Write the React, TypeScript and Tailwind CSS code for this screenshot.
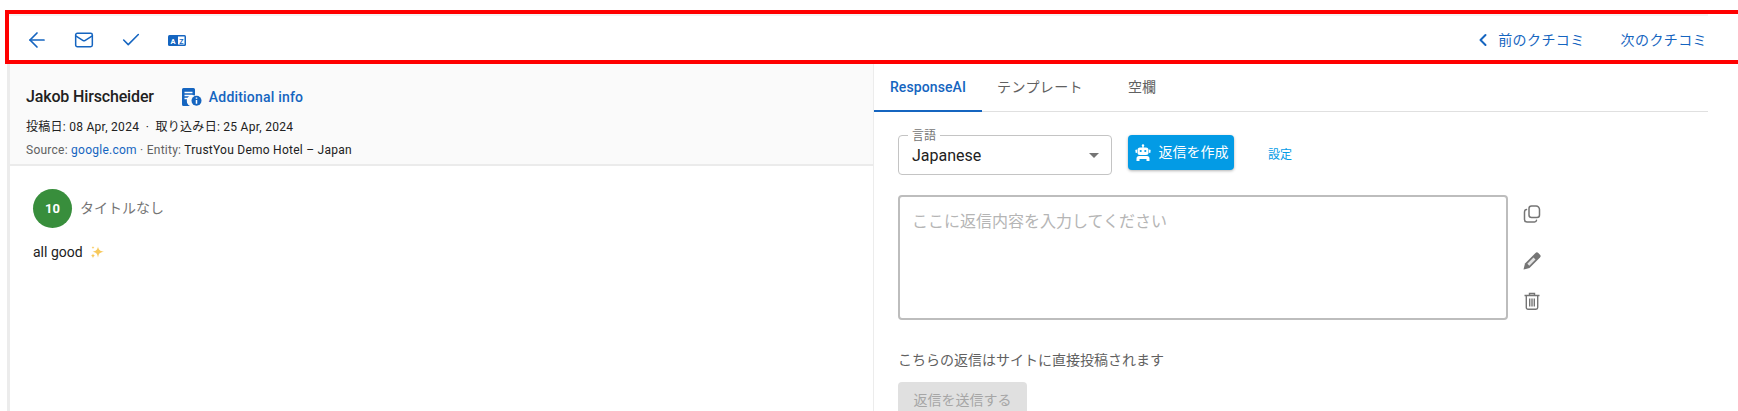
import { ArrowLeft, Check, ChevronLeft, Mail } from "lucide-react";

const font = "font-['Roboto','Noto_Sans_CJK_JP',sans-serif]";

function TranslateIcon() {
  return (
    <svg width="18" height="11" viewBox="0 0 18 11">
      <rect width="18" height="11" rx="1.5" fill="#1565c0" />
      <rect x="10" y="1.5" width="6.5" height="8" fill="#fff" />
      <text x="2.5" y="8.5" fontSize="7.5" fontWeight="700" fill="#fff" fontFamily="Roboto">A</text>
      <text x="11.3" y="8.5" fontSize="7" fontWeight="700" fill="#1565c0" fontFamily="Roboto">Z</text>
    </svg>
  );
}

function InfoDocIcon() {
  return (
    <svg width="20" height="18" viewBox="0 0 20 18">
      <path d="M0 1.500A1.500 1.500 0 0 1 1.500 0h10A1.500 1.500 0 0 1 13 1.500V7.500a5.500 5.500 0 0 0-5 10.500H1.500A1.500 1.500 0 0 1 0 16.500z" fill="#1565c0" />
      <path d="M2.500 4.500h8M2.500 7.500h8M2.500 10.500h4.500" stroke="#fff" strokeWidth="1.300" />
      <circle cx="14.500" cy="12.800" r="5" fill="#1565c0" />
      <path d="M14.500 12v3.800M14.500 9.600v1.200" stroke="#fff" strokeWidth="1.500" />
    </svg>
  );
}

function RobotIcon() {
  return (
    <svg width="18" height="18" viewBox="0 0 18 18" fill="#fff">
      <circle cx="9" cy="1.500" r="1.200" />
      <rect x="8.400" y="2" width="1.200" height="2" />
      <rect x="3.500" y="3.500" width="11" height="7.500" rx="2.500" />
      <rect x="1.500" y="5.500" width="1.500" height="3.500" rx="0.700" />
      <rect x="15" y="5.500" width="1.500" height="3.500" rx="0.700" />
      <circle cx="6.700" cy="7" r="1.100" fill="#039be5" />
      <circle cx="11.300" cy="7" r="1.100" fill="#039be5" />
      <path d="M2.500 17v-2.500A2.500 2.500 0 0 1 5 12h8a2.500 2.500 0 0 1 2.500 2.500V17h-3v-2h-7v2z" />
    </svg>
  );
}

function Sparkles() {
  return (
    <svg width="14" height="13" viewBox="0 0 14 13" fill="#f7c95c" className="ml-[7px]">
      <path d="M8 .5c.6 3.300 1.700 4.500 6 5.300-4.300.7-5.400 1.900-6 5.700-.6-3.800-1.700-5-5.500-5.700C6.300 5 7.400 3.800 8 .5z" />
      <path d="M3 7.500c.3 1.300.8 1.900 2.200 2.200-1.400.3-1.900.9-2.200 2.800-.3-1.900-.8-2.500-2.200-2.800C2.200 9.400 2.700 8.800 3 7.500z" />
      <path d="M3 0c.2 1 .6 1.400 1.600 1.600C3.600 1.800 3.200 2.200 3 3.200c-.2-1-.6-1.400-1.600-1.600C2.400 1.400 2.800 1 3 0z" />
    </svg>
  );
}

function CopyIcon() {
  return (
    <svg width="18" height="18" viewBox="0 0 18 18" fill="none" stroke="#757575" strokeWidth="1.500" strokeLinejoin="round">
      <path d="M8.500 1h4.500a3.500 3.500 0 0 1 3.500 3.500V10a2.500 2.500 0 0 1-2.500 2.500H8.500A2.500 2.500 0 0 1 6 10V3.500A2.500 2.500 0 0 1 8.500 1z" />
      <path d="M3.500 4.500A2.500 2.500 0 0 0 1.500 7v7.500A2.500 2.500 0 0 0 4 17h7.500a2 2 0 0 0 2-1.800" strokeLinecap="round" />
    </svg>
  );
}

function PencilIcon() {
  return (
    <svg width="18" height="18" viewBox="0 0 18 18">
      <path d="M12.500 1a2 2 0 0 1 2.800 0l1.700 1.700a2 2 0 0 1 0 2.800L6.500 16 .5 17.500 2 11.500z" fill="#757575" />
      <path d="M4.300 11.700l6.200-6.200 2 2-6.200 6.200z" fill="#fff" opacity="0.8" />
    </svg>
  );
}

function TrashIcon() {
  return (
    <svg width="18" height="18" viewBox="0 0 18 18" fill="none" stroke="#757575" strokeWidth="1.400">
      <path d="M1.500 3.500h15M6.500 3.500V1.500h5v2" />
      <path d="M3.300 3.500v12A1.700 1.700 0 0 0 5 17.200h8a1.700 1.700 0 0 0 1.700-1.700v-12" />
      <path d="M6.700 6.500v8M9 6.500v8M11.300 6.500v8" />
    </svg>
  );
}

export default function App() {
  return (
    <div className={`relative h-[411px] w-[1738px] overflow-hidden bg-white text-[#212121] ${font}`}>
      <div className="absolute left-[5px] right-0 top-[10px] z-10 h-[54px] border-4 border-r-0 border-[#ff0000]" />

      <div className="ml-[7px] w-[1701px]">
        <div className="h-[14px] bg-white" />
        <div className="flex h-[50px] items-center justify-between border-t-2 border-[#f3f3f3] pl-[18px] pr-[1px] text-[#1565c0]">
          <div className="flex items-center">
            <ArrowLeft size={24} strokeWidth={1.7} />
            <Mail size={20} strokeWidth={1.8} className="ml-[25px]" />
            <Check size={22} strokeWidth={1.7} className="ml-[26px]" />
            <div className="ml-[26px]"><TranslateIcon /></div>
          </div>
          <div className="flex items-center text-[14px] leading-5 tracking-[0.4px]">
            <ChevronLeft size={20} strokeWidth={2.4} />
            <span className="ml-[5px]">前のクチコミ</span>
            <span className="ml-[36px]">次のクチコミ</span>
          </div>
        </div>

        <div className="flex h-[347px]">
          <div className="w-[867px] shrink-0 border-l-[3px] border-r border-[#ececec]">
            <div className="h-[102px] border-b-2 border-[#ebebeb] bg-[#fafafa] pl-[16px] pt-[22px]">
              <div className="flex h-[22px] items-center">
                <span className="text-[16px] font-medium tracking-[-0.15px]">Jakob Hirscheider</span>
                <span className="ml-[28px]"><InfoDocIcon /></span>
                <span className="ml-[7px] text-[14px] font-medium tracking-[0.2px] text-[#1565c0]">Additional info</span>
              </div>
              <div className="mt-[9px] text-[12px] leading-5 tracking-[0.27px]">投稿日: 08 Apr, 2024 &nbsp;·&nbsp; 取り込み日: 25 Apr, 2024</div>
              <div className="mt-[3px] text-[12px] leading-5 tracking-[0.25px] text-[#616161]">
                Source: <span className="text-[#1565c0]">google.com</span> · Entity: <span className="text-[#212121]">TrustYou Demo Hotel – Japan</span>
              </div>
            </div>
            <div className="pl-[23px] pt-[23px]">
              <div className="flex items-center">
                <div className="flex h-[39px] w-[39px] items-center justify-center rounded-full bg-[#388e3c] text-[13px] font-bold text-white">10</div>
                <span className="ml-2 text-[14px] text-[#757575]">タイトルなし</span>
              </div>
              <div className="mt-[14px] flex items-center text-[14px] leading-5">
                all good
                <Sparkles />
              </div>
            </div>
          </div>

          <div className="flex-1">
            <div className="flex h-[48px] border-b border-[#e0e0e0] text-[14px]">
              <div className="-mb-px flex w-[108px] items-center justify-center border-b-2 border-[#1565c0] font-medium tracking-[0.1px] text-[#1565c0]">ResponseAI</div>
              <div className="ml-[15px] flex items-center tracking-[0.4px] text-[#616161]">テンプレート</div>
              <div className="ml-[45px] flex items-center text-[#616161]">空欄</div>
            </div>

            <div className="pl-[24px] pt-[23px]">
              <div className="flex items-start">
                <div className="relative flex h-[40px] w-[214px] items-center rounded border border-[#c4c4c4] pl-[13px] pt-[1px] text-[16px]">
                  <span className="absolute -top-[8px] left-[9px] bg-white px-[4px] text-[12px] leading-4 text-[#757575]">言語</span>
                  Japanese
                  <span className="absolute right-[12px] top-[17px] h-0 w-0 border-x-[5px] border-t-[5px] border-x-transparent border-t-[#757575]" />
                </div>
                <button className="ml-[16px] flex h-[35px] w-[106px] items-center justify-center rounded bg-[#039be5] text-[14px] text-white shadow-[0_1px_3px_rgba(0,0,0,0.3)]">
                  <RobotIcon />
                  <span className="ml-[7px]">返信を作成</span>
                </button>
                <span className="ml-[34px] mt-[10px] text-[12px] leading-5 text-[#039be5]">設定</span>
              </div>

              <div className="mt-[20px] flex items-start">
                <div className="h-[125px] w-[610px] rounded border-2 border-[#bdbdbd] pl-[12px] pt-[13px] text-[16px] leading-6 text-[#b5b5b5]">ここに返信内容を入力してください</div>
                <div className="ml-[15px] flex flex-col items-center">
                  <div className="mt-[10px]"><CopyIcon /></div>
                  <div className="mt-[29px]"><PencilIcon /></div>
                  <div className="mt-[22px]"><TrashIcon /></div>
                </div>
              </div>

              <p className="mt-[30px] text-[14px] leading-5 text-[#616161]">こちらの返信はサイトに直接投稿されます</p>
              <button className="mt-[12px] h-[36px] w-[129px] rounded bg-[#e0e0e0] text-[14px] text-[#a6a6a6]">返信を送信する</button>
            </div>
          </div>
        </div>
      </div>
    </div>
  );
}
